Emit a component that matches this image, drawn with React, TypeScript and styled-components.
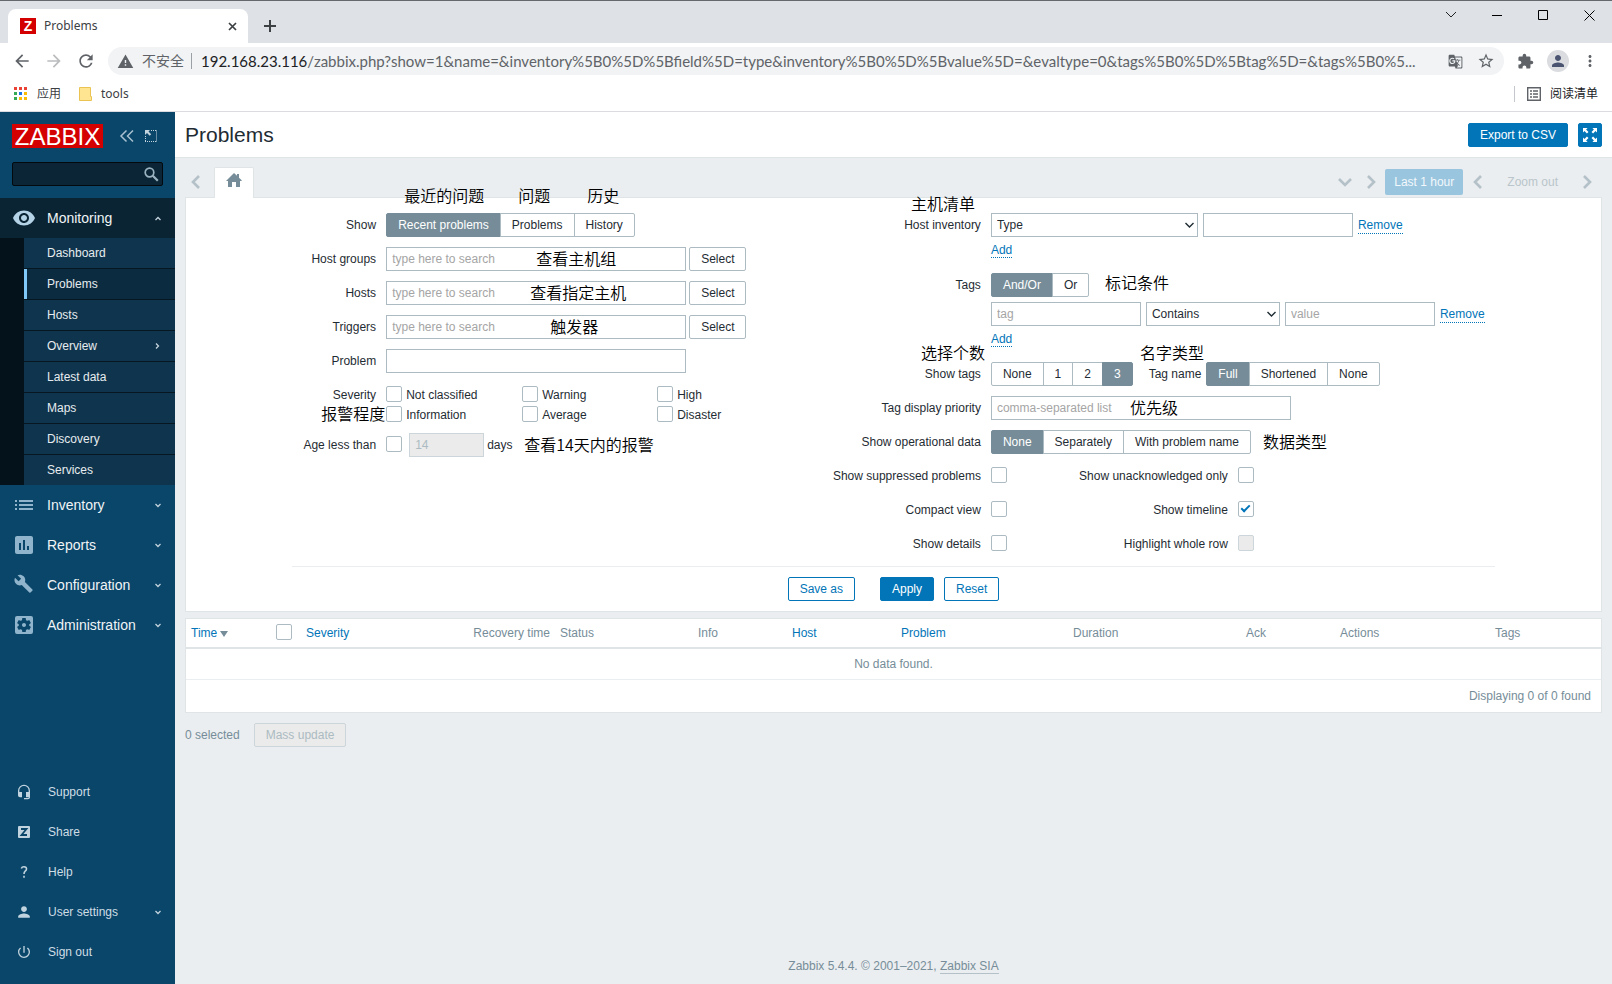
import React from 'react';
import styled, { createGlobalStyle, css } from 'styled-components';
import {
  MdArrowBack, MdArrowForward, MdRefresh, MdWarning, MdGTranslate, MdStarBorder, MdExtension, MdPerson,
  MdMoreVert, MdVisibility, MdInsertChart, MdBuild, MdSettingsApplications, MdPowerSettingsNew, MdHeadsetMic,
} from 'react-icons/md';

const sans = '"Liberation Sans", Arial, "Noto Sans CJK SC", sans-serif';
const chromeFont = '"Noto Sans", "Noto Sans CJK SC", sans-serif';

const GlobalStyle = createGlobalStyle`
  *, *::before, *::after { box-sizing: border-box; }
  html, body, #root { height: 100%; }
  body { margin: 0; font: 12px/16px ${sans}; color: #1f2c33; background: #ebeef0; }
  button, input, select { font: inherit; color: inherit; margin: 0; }
  button { cursor: pointer; }
  a { text-decoration: none; }
  ul { list-style: none; margin: 0; padding: 0; }
`;

/* ---------- browser window ---------- */

const Window = styled.div`
  display: flex;
  flex-direction: column;
  min-height: 100%;
`;
const Chrome = styled.header`
  font-family: ${chromeFont};
  background: #fff;
  border-bottom: 1px solid #dadce0;
  color: #3c4043;
`;
const TabStrip = styled.div`
  display: flex;
  align-items: flex-end;
  height: 43px;
  padding-left: 8px;
  background: #dee1e6;
  border-top: 1px solid #66686b;
`;
const BrowserTab = styled.div`
  display: flex;
  align-items: center;
  gap: 8px;
  width: 240px;
  height: 34px;
  padding: 0 9px 0 12px;
  background: #fff;
  border-radius: 8px 8px 0 0;
  font-size: 12px;
  span { flex: 1; }
`;
const Favicon = styled.b`
  width: 16px;
  background: #d40000;
  color: #fff;
  font: bold 14px/16px ${sans};
  text-align: center;
`;
const BareButton = styled.button<{ $w?: number; $h?: number }>`
  display: flex;
  align-items: center;
  justify-content: center;
  width: ${p => p.$w ?? 16}px;
  height: ${p => p.$h ?? 16}px;
  padding: 0;
  border: 0;
  background: none;
  flex: none;
`;
const NewTab = styled(BareButton)`margin: 0 auto 0 8px;`;
const WindowButtons = styled.div`
  display: flex;
  align-self: flex-start;
`;
const Toolbar = styled.div`
  display: flex;
  align-items: center;
  height: 36px;
  padding: 0 8px;
  color: #5f6368;
`;
const Omnibox = styled.div`
  display: flex;
  align-items: center;
  flex: 1;
  min-width: 0;
  height: 28px;
  margin: 0 6px 0 8px;
  padding: 0 3px 0 9px;
  border-radius: 14px;
  background: #f1f3f4;
  font-size: 14px;
`;
const Insecure = styled.span`
  padding: 0 7px 0 8px;
  margin-right: 9px;
  border-right: 1px solid #9aa0a6;
  white-space: nowrap;
`;
const Url = styled.span`
  flex: 1;
  min-width: 0;
  font: 15px/24px Lato, "Noto Sans", sans-serif;
  white-space: nowrap;
  b { font-weight: 400; color: #202124; }
`;
const Avatar = styled.span`
  display: flex;
  align-items: center;
  justify-content: center;
  width: 22px;
  height: 22px;
  border-radius: 50%;
  background: #dadce0;
  color: #4a5470;
`;
const Bookmarks = styled.nav`
  display: flex;
  align-items: center;
  height: 32px;
  padding: 0 14px 2px 14px;
  font-size: 12px;
  a { display: flex; align-items: center; gap: 9px; color: inherit; }
  a + a { margin-left: 18px; }
  a:last-child { margin-left: auto; padding-left: 12px; border-left: 1px solid #c4c7cb; color: #202124; }
`;

/* ---------- page frame ---------- */

const Page = styled.div`
  display: flex;
  flex: 1;
`;
const Sidebar = styled.aside`
  display: flex;
  flex-direction: column;
  width: 175px;
  flex: none;
  padding-bottom: 12px;
  background: #0a466a;
`;
const Brand = styled.div`
  display: flex;
  align-items: center;
  height: 48px;
  padding-left: 12px;
`;
const Logo = styled.a`
  width: 91px;
  height: 24px;
  flex: none;
  margin-right: 15px;
  background: #d40000;
  color: #fff;
  font-size: 24px;
  line-height: 25px;
  text-align: center;
`;
const Search = styled.form`
  display: flex;
  align-items: center;
  height: 24px;
  margin: 2px 12px 12px;
  padding-right: 1px;
  border: 1px solid #020a0f;
  border-radius: 2px;
  background: #0b2536;
  input { flex: 1; min-width: 0; border: 0; background: none; color: #fff; outline: 0; }
`;
const MenuLink = styled.a<{ $open?: boolean }>`
  display: flex;
  align-items: center;
  height: 40px;
  padding: 0 12px;
  color: #f0f4f6;
  font-size: 14px;
  background: ${p => (p.$open ? '#0a2434' : 'none')};
  > svg:first-child { flex: none; margin-right: 11px; color: ${p => (p.$open ? '#b5d3e6' : '#8fb4cb')}; }
  > span { flex: 1; }
`;
const SubMenu = styled.ul`
  padding-left: 24px;
  background: #04121b;
  li + li { border-top: 1px solid #061722; }
`;
const SubLink = styled.a<{ $active?: boolean }>`
  display: flex;
  align-items: center;
  justify-content: space-between;
  height: 30px;
  padding: 0 13px 0 20px;
  border-left: 3px solid ${p => (p.$active ? '#7fc8f8' : '#0f344d')};
  background: ${p => (p.$active ? '#0b2b40' : '#0f344d')};
  color: #e6ecef;
`;
const UserMenu = styled.nav`
  margin-top: auto;
`;
const UserLink = styled(MenuLink)`
  padding-left: 16px;
  color: #cfdde5;
  font-size: 12px;
  > svg:first-child { margin-right: 16px; color: #c0d3de; }
`;
const Main = styled.main`
  display: flex;
  flex-direction: column;
  flex: 1;
  min-width: 0;
`;
const PageHeader = styled.div`
  display: flex;
  align-items: center;
  gap: 10px;
  height: 46px;
  padding: 0 10px;
  background: #fff;
  border-bottom: 1px solid #dfe4e7;
  h1 { flex: 1; margin: 0; font-size: 21px; font-weight: 400; line-height: 24px; }
`;
const Button = styled.button<{ $kind?: 'primary' | 'outline' | 'plain' | 'square' }>`
  display: inline-flex;
  align-items: center;
  justify-content: center;
  height: 24px;
  padding: 0 11px;
  border: 1px solid #0275b8;
  border-radius: 2px;
  background: #fff;
  color: #0275b8;
  white-space: nowrap;
  ${p => (p.$kind === 'primary' || p.$kind === 'square') && css`background: #0275b8; color: #fff;`}
  ${p => p.$kind === 'square' && css`width: 24px; padding: 0;`}
  ${p => p.$kind === 'plain' && css`border-color: #acbbc2; color: #1f2c33;`}
  &:disabled { background: #ebebeb; border-color: #ccd5d9; color: #acbbc2; }
`;
const Content = styled.div`
  display: flex;
  flex-direction: column;
  flex: 1;
  padding: 9px 10px 10px;
`;
const FilterTabs = styled.div`
  display: flex;
  align-items: center;
  height: 30px;
  color: #b4c1c8;
`;
const HomeTab = styled.button`
  position: relative;
  display: flex;
  align-items: center;
  justify-content: center;
  align-self: stretch;
  width: 40px;
  margin: 0 auto -1px 7px;
  padding: 0 0 6px;
  border: 1px solid #dfe4e7;
  border-bottom: 0;
  border-radius: 2px 2px 0 0;
  background: #fff;
  color: #768d99;
`;
const TimeRange = styled.button`
  height: 26px;
  margin: 0 3px 0 1px;
  padding: 0 9px;
  border: 0;
  border-radius: 2px;
  background: #99c5df;
  color: #f2f8fb;
`;
const ZoomOut = styled.button`
  padding: 0 14px 0 17px;
  border: 0;
  background: none;
  color: #b9c5cb;
`;
const Panel = styled.section`
  border: 1px solid #dfe4e7;
  background: #fff;
`;
const FilterForm = styled.form`
  width: 85%;
  min-width: 1140px;
  margin: 0 auto;
  padding: 15px 0 10px;
`;
const FilterColumns = styled.div`
  display: flex;
  justify-content: space-between;
  padding-bottom: 10px;
  border-bottom: 1px solid #ebeef0;
`;
const Fields = styled.div<{ $label: number; $width: number }>`
  display: grid;
  grid-template-columns: ${p => p.$label}px 1fr;
  gap: 10px;
  align-content: start;
  width: ${p => p.$width}px;
`;
const Label = styled.label`
  line-height: 24px;
  text-align: right;
  white-space: nowrap;
`;
const Field = styled.div`
  position: relative;
  min-width: 0;
`;
const Line = styled.div<{ $gap?: number }>`
  display: flex;
  align-items: center;
  height: 24px;
  gap: ${p => p.$gap ?? 5}px;
  & + & { margin-top: 5px; }
`;
const TextBox = styled.input<{ $w: number }>`
  width: ${p => p.$w}px;
  height: 24px;
  padding: 0 5px;
  border: 1px solid #acbbc2;
  background: #fff;
  flex: none;
  &::placeholder { color: #a5a5a5; opacity: 1; }
  &:disabled { background: #ebebeb; border-color: #ccd5d9; color: #acbbc2; }
`;
const SelectFrame = styled.span<{ $w: number }>`
  display: grid;
  align-items: center;
  width: ${p => p.$w}px;
  flex: none;
  > * { grid-area: 1 / 1; }
  > svg { justify-self: end; margin-right: 4px; pointer-events: none; }
`;
const SelectBox = styled.select`
  appearance: none;
  width: 100%;
  height: 24px;
  padding: 0 5px;
  border: 1px solid #acbbc2;
  border-radius: 0;
  background: #fff;
`;
const Check = styled.input.attrs({ type: 'checkbox' })`
  appearance: none;
  display: grid;
  place-items: center;
  width: 16px;
  height: 16px;
  margin-bottom: 2px;
  border: 1px solid #acbbc2;
  border-radius: 2px;
  background: #fff;
  flex: none;
  &:checked::before {
    content: '';
    width: 9px;
    height: 5px;
    margin-bottom: 3px;
    border: solid #0275b8;
    border-width: 0 0 2px 2px;
    transform: rotate(-45deg);
  }
  &:disabled { background: #ebebeb; border-color: #ccd5d9; }
`;
const AgeCheck = styled(Check)`
  margin-right: 4px;
`;
const SeverityGrid = styled.div`
  display: grid;
  grid-template-columns: 136px 135px auto;
  grid-auto-rows: 16px;
  justify-content: start;
  row-gap: 4px;
  padding-top: 4px;
  label { display: flex; align-items: center; gap: 4px; }
`;
const SegmentGroup = styled.span`
  display: flex;
  label { position: relative; }
  label + label { margin-left: -1px; }
  input { position: absolute; opacity: 0; }
  span {
    display: block;
    height: 24px;
    padding: 0 11px;
    border: 1px solid #acbbc2;
    line-height: 22px;
    white-space: nowrap;
  }
  label:first-child span { border-radius: 2px 0 0 2px; }
  label:last-child span { border-radius: 0 2px 2px 0; }
  input:checked + span { background: #768d99; border-color: #768d99; color: #fff; }
`;
const DottedLink = styled.a`
  padding-top: 2px;
  border-bottom: 1px dotted #0275b8;
  color: #0275b8;
  line-height: 15px;
`;
const AddLine = styled.div`
  height: 26px;
  padding-top: 5px;
`;
const NameLabel = styled.span`
  margin-left: 11px;
`;
const PairLabel = styled.label`
  width: 221px;
  padding-right: 5px;
  text-align: right;
`;
const Note = styled.span<{ $x: number; $y: number }>`
  position: absolute;
  left: ${p => p.$x}px;
  top: ${p => p.$y}px;
  z-index: 1;
  color: #000;
  font: 350 16px/24px "Noto Sans CJK SC", sans-serif;
  white-space: nowrap;
  pointer-events: none;
`;
const FormButtons = styled.div`
  display: flex;
  justify-content: center;
  gap: 10px;
  padding-top: 10px;
  button:first-child { margin-right: 15px; }
`;
const DataTable = styled.table`
  width: 100%;
  margin-top: 6px;
  table-layout: fixed;
  border-collapse: separate;
  border-spacing: 0;
  border: 1px solid #dfe4e7;
  background: #fff;
  color: #768d99;
  th { height: 30px; padding: 0 5px; border-bottom: 2px solid #dfe4e7; font-weight: 400; text-align: left; white-space: nowrap; }
  th a { color: #0275b8; }
  th svg { margin-left: 3px; }
  td { height: 31px; text-align: center; border-bottom: 1px solid #ebeef0; }
  tfoot td { height: 32px; padding: 0 10px; text-align: right; border-bottom: 0; }
`;
const RightTh = styled.th`
  && { text-align: right; }
`;
const BulkActions = styled.div`
  display: flex;
  align-items: center;
  gap: 14px;
  margin-top: 10px;
  color: #768d99;
`;
const Footer = styled.footer`
  margin-top: auto;
  color: #768d99;
  text-align: center;
  a { color: inherit; border-bottom: 1px solid #b4c1c8; }
`;

/* ---------- drawings ---------- */

const Stroke = ({ d, w, h, sw = 1, color = 'currentColor' }: { d: string; w: number; h: number; sw?: number; color?: string }) => (
  <svg width={w} height={h} viewBox={`0 0 ${w} ${h}`} fill="none" stroke={color} strokeWidth={sw} aria-hidden="true"><path d={d} /></svg>
);
const Caret = ({ up, right }: { up?: boolean; right?: boolean }) => (
  <Stroke w={9} h={8} sw={1.3} color="#c3d2dc" d={right ? 'M3 1.5l2.500 2.500-2.500 2.500' : up ? 'M1.500 6l2.500-2.500 2.500 2.500' : 'M1.500 3l2.500 2.500 2.500-2.500'} />
);
const Chevron = ({ dir }: { dir: 'left' | 'right' | 'down' }) => (
  <Stroke w={14} h={14} sw={2.6} d={{ left: 'M10 1L4 7l6 6', right: 'M4 1l6 6-6 6', down: 'M1 4l6 6 6-6' }[dir]} />
);
const ListIcon = () => (
  <svg width="24" height="18" viewBox="0 0 24 18" fill="currentColor" aria-hidden="true">
    <path d="M3 4h2v2H3zM7 4h14v2H7zM3 8h2v2H3zM7 8h14v2H7zM3 12h2v2H3zM7 12h14v2H7z" />
  </svg>
);
const AppsIcon = () => {
  const colors = ['#ea4335', '#ea4335', '#ea4335', '#34a853', '#1a73e8', '#fbbc04', '#34a853', '#fbbc04', '#fbbc04'];
  return (
    <svg width="14" height="14" viewBox="0 0 14 14" aria-hidden="true">
      {colors.map((c, i) => <rect key={i} x={(i % 3) * 5} y={Math.floor(i / 3) * 5} width="3" height="3" fill={c} />)}
    </svg>
  );
};
const KioskIcon = () => (
  <svg width="14" height="14" viewBox="0 0 14 14" fill="#fff" aria-hidden="true">
    <path d="M0 0h4.600L3.100 1.500 5.500 3.900 3.900 5.500 1.500 3.100 0 4.600zM14 0v4.600l-1.500-1.500-2.400 2.400-1.600-1.600 2.400-2.400L9.400 0zM14 14H9.400l1.500-1.500-2.400-2.400 1.600-1.600 2.400 2.400L14 9.400zM0 14V9.400l1.500 1.500 2.400-2.400 1.600 1.600-2.400 2.400L4.600 14z" />
  </svg>
);

/* ---------- parts ---------- */

const Segments = ({ name, options, value }: { name: string; options: string[]; value: string }) => (
  <SegmentGroup role="radiogroup" aria-label={name}>
    {options.map(o => (
      <label key={o}><input type="radio" name={name} defaultChecked={o === value} /><span>{o}</span></label>
    ))}
  </SegmentGroup>
);
const Dropdown = ({ label, options, width }: { label: string; options: string[]; width: number }) => (
  <SelectFrame $w={width}>
    <SelectBox aria-label={label}>{options.map(o => <option key={o}>{o}</option>)}</SelectBox>
    <Stroke w={9} h={8} sw={1.4} d="M0.5 2l4 4 4-4" />
  </SelectFrame>
);
const SearchRow = ({ id, label, note, x }: { id: string; label: string; note: string; x: number }) => (
  <>
    <Label htmlFor={id}>{label}</Label>
    <Field>
      <Line $gap={3}>
        <TextBox id={id} $w={300} placeholder="type here to search" />
        <Button type="button" $kind="plain">Select</Button>
      </Line>
      <Note $x={x} $y={-1}>{note}</Note>
    </Field>
  </>
);
const CheckPair = ({ left, right, checked, disabled }: { left: string; right: string; checked?: boolean; disabled?: boolean }) => (
  <>
    <Label htmlFor={left}>{left}</Label>
    <Line>
      <Check id={left} />
      <PairLabel htmlFor={right}>{right}</PairLabel>
      <Check id={right} defaultChecked={checked} disabled={disabled} />
    </Line>
  </>
);

const columns: [string, number][] = [
  ['Time', 85], ['', 30], ['Severity', 167], ['Recovery time', 87], ['Status', 138], ['Info', 94], ['Host', 109],
  ['Problem', 172], ['Duration', 173], ['Ack', 94], ['Actions', 155], ['Tags', 111],
];
const sortable = ['Time', 'Severity', 'Host', 'Problem'];

export default function App() {
  return (
    <Window>
      <GlobalStyle />
      <Chrome>
        <TabStrip>
          <BrowserTab>
            <Favicon>Z</Favicon>
            <span>Problems</span>
            <BareButton aria-label="Close tab" $w={14}><Stroke w={9} h={9} sw={1.7} d="M1 1l7 7M8 1L1 8" /></BareButton>
          </BrowserTab>
          <NewTab aria-label="New tab" $w={28} $h={34}><Stroke w={12} h={12} sw={2} d="M6 0v12M0 6h12" /></NewTab>
          <WindowButtons>
            <BareButton aria-label="Search tabs" $w={46} $h={28}><Stroke w={12} h={8} color="#222" d="M1 1l5 5 5-5" /></BareButton>
            <BareButton aria-label="Minimize" $w={46} $h={28}><Stroke w={10} h={10} color="#000" d="M0 5.5h10" /></BareButton>
            <BareButton aria-label="Maximize" $w={46} $h={28}><Stroke w={10} h={10} color="#000" d="M.5 .5h9v9h-9z" /></BareButton>
            <BareButton aria-label="Close" $w={46} $h={28}><Stroke w={11} h={11} color="#000" d="M.5 .5l10 10M10.5 .5l-10 10" /></BareButton>
          </WindowButtons>
        </TabStrip>
        <Toolbar>
          <BareButton aria-label="Back" $w={28} $h={28}><MdArrowBack size={20} /></BareButton>
          <BareButton aria-label="Forward" $w={36} $h={28}><MdArrowForward size={20} color="#babcbe" /></BareButton>
          <BareButton aria-label="Reload" $w={28} $h={28}><MdRefresh size={20} /></BareButton>
          <Omnibox>
            <MdWarning size={17} />
            <Insecure>不安全</Insecure>
            <Url><b>192.168.23.116</b>/zabbix.php?show=1&amp;name=&amp;inventory%5B0%5D%5Bfield%5D=type&amp;inventory%5B0%5D%5Bvalue%5D=&amp;evaltype=0&amp;tags%5B0%5D%5Btag%5D=&amp;tags%5B0%5...</Url>
            <BareButton aria-label="Translate" $w={32}><MdGTranslate size={15} /></BareButton>
            <BareButton aria-label="Bookmark" $w={30}><MdStarBorder size={18} /></BareButton>
          </Omnibox>
          <BareButton aria-label="Extensions" $w={30}><MdExtension size={17} /></BareButton>
          <BareButton aria-label="Profile" $w={36}><Avatar><MdPerson size={18} /></Avatar></BareButton>
          <BareButton aria-label="Menu" $w={28}><MdMoreVert size={18} /></BareButton>
        </Toolbar>
        <Bookmarks>
          <a href="#apps"><AppsIcon />应用</a>
          <a href="#tools">
            <svg width="13" height="14" viewBox="0 0 13 14" aria-hidden="true"><path d="M.5.5h11v9h1v4H.5z" fill="#ffe591" stroke="#e9c452" /></svg>
            tools
          </a>
          <a href="#reading">
            <svg width="14" height="14" viewBox="0 0 14 14" aria-hidden="true"><path d="M.7.7h12.600v12.600H.7z" fill="none" stroke="#5f6368" strokeWidth="1.400" /><path d="M3 4h2M6 4h5M3 7h2M6 7h5M3 10h2M6 10h5" stroke="#5f6368" strokeWidth="1.300" /></svg>
            阅读清单
          </a>
        </Bookmarks>
      </Chrome>
      <Page>
        <Sidebar>
          <Brand>
            <Logo href="#home">ZABBIX</Logo>
            <BareButton aria-label="Collapse sidebar" $w={18}><Stroke w={16} h={14} color="#a9c1d0" sw={1.5} d="M7.500 1.500L2 7l5.500 5.500M14 1.500L8.500 7l5.500 5.500" /></BareButton>
            <BareButton aria-label="Hide sidebar" $w={30}>
              <svg width="14" height="14" viewBox="0 0 14 14" fill="none" stroke="#c3d4de" aria-hidden="true"><path d="M7 1.500h6M12.500 1.500v12M1.500 7v6M1 12.500h12" strokeDasharray="1 1" /><path d="M1 1h5L4.500 2.500l2.700 2.700-1.500 1.500L3 4 1 6z" fill="#c3d4de" stroke="none" /></svg>
            </BareButton>
          </Brand>
          <Search>
            <input aria-label="Search" />
            <BareButton aria-label="Run search" $w={20}><svg width="15" height="15" viewBox="0 0 15 15" fill="none" stroke="#9bb3c1" aria-hidden="true"><circle cx="5.500" cy="5.500" r="4.300" strokeWidth="1.700" /><path d="M8.800 8.800l5 5" strokeWidth="2.200" /></svg></BareButton>
          </Search>
          <nav>
            <MenuLink href="#monitoring" $open><MdVisibility size={24} /><span>Monitoring</span><Caret up /></MenuLink>
            <SubMenu>
              {['Dashboard', 'Problems', 'Hosts', 'Overview', 'Latest data', 'Maps', 'Discovery', 'Services'].map(t => (
                <li key={t}><SubLink href={`#${t}`} $active={t === 'Problems'}>{t}{t === 'Overview' && <Caret right />}</SubLink></li>
              ))}
            </SubMenu>
            <MenuLink href="#inventory"><ListIcon /><span>Inventory</span><Caret /></MenuLink>
            <MenuLink href="#reports"><MdInsertChart size={24} /><span>Reports</span><Caret /></MenuLink>
            <MenuLink href="#configuration"><MdBuild size={24} viewBox="-2 -1 29 29" /><span>Configuration</span><Caret /></MenuLink>
            <MenuLink href="#administration"><MdSettingsApplications size={24} /><span>Administration</span><Caret /></MenuLink>
          </nav>
          <UserMenu>
            <UserLink href="#support"><MdHeadsetMic size={16} /><span>Support</span></UserLink>
            <UserLink href="#share">
              <svg width="16" height="16" viewBox="0 0 16 16" aria-hidden="true"><rect x="2" y="2" width="12" height="12" rx="1" fill="currentColor" /><path d="M5 5h5.500L5.500 11H11" fill="none" stroke="#0a466a" strokeWidth="1.800" /></svg>
              <span>Share</span>
            </UserLink>
            <UserLink href="#help">
              <Stroke w={16} h={16} sw={1.6} d="M5.300 4.500Q6 2.600 8 2.700q2.600.1 2.500 2.200 0 1.300-1.300 2.300Q8 8.200 8 10M8 11.800v2" />
              <span>Help</span>
            </UserLink>
            <UserLink href="#user"><MdPerson size={16} viewBox="1 1 22 22" /><span>User settings</span><Caret /></UserLink>
            <UserLink href="#signout"><MdPowerSettingsNew size={16} /><span>Sign out</span></UserLink>
          </UserMenu>
        </Sidebar>
        <Main>
          <PageHeader>
            <h1>Problems</h1>
            <Button $kind="primary">Export to CSV</Button>
            <Button $kind="square" aria-label="Kiosk mode"><KioskIcon /></Button>
          </PageHeader>
          <Content>
            <FilterTabs>
              <BareButton aria-label="Previous tab" $w={22}><Chevron dir="left" /></BareButton>
              <HomeTab aria-label="Home"><svg width="16" height="14" viewBox="0 0 16 14" fill="currentColor" aria-hidden="true"><path d="M8 0l3 2.800V1h2v3.700L16 7.500l-1 .5h-1v6h-4V9H6v5H2V8H0z" /></svg></HomeTab>
              <BareButton aria-label="More tabs" $w={26}><Chevron dir="down" /></BareButton>
              <BareButton aria-label="Next tab" $w={26}><Chevron dir="right" /></BareButton>
              <TimeRange>Last 1 hour</TimeRange>
              <BareButton aria-label="Earlier" $w={24}><Chevron dir="left" /></BareButton>
              <ZoomOut>Zoom out</ZoomOut>
              <BareButton aria-label="Later" $w={30}><Chevron dir="right" /></BareButton>
            </FilterTabs>
            <Panel>
              <FilterForm>
                <FilterColumns>
                  <Fields $label={84} $width={480}>
                    <Label as="span">Show</Label>
                    <Field>
                      <Segments name="Show" options={['Recent problems', 'Problems', 'History']} value="Recent problems" />
                      <Note $x={18} $y={-30}>最近的问题</Note>
                      <Note $x={132} $y={-30}>问题</Note>
                      <Note $x={201} $y={-30}>历史</Note>
                    </Field>
                    <SearchRow id="groups" label="Host groups" note="查看主机组" x={150} />
                    <SearchRow id="hosts" label="Hosts" note="查看指定主机" x={144} />
                    <SearchRow id="triggers" label="Triggers" note="触发器" x={164} />
                    <Label htmlFor="problem">Problem</Label>
                    <Field><Line><TextBox id="problem" $w={300} /></Line></Field>
                    <Label as="span">Severity</Label>
                    <Field>
                      <SeverityGrid>
                        {['Not classified', 'Warning', 'High', 'Information', 'Average', 'Disaster'].map(s => (
                          <label key={s}><Check />{s}</label>
                        ))}
                      </SeverityGrid>
                      <Note $x={-65} $y={18}>报警程度</Note>
                    </Field>
                    <Label htmlFor="age">Age less than</Label>
                    <Field>
                      <Line $gap={3}>
                        <AgeCheck id="age" />
                        <TextBox $w={75} defaultValue="14" aria-label="Days" disabled />
                        days
                      </Line>
                      <Note $x={138} $y={-1}>查看14天内的报警</Note>
                    </Field>
                  </Fields>
                  <Fields $label={148} $width={662}>
                    <Label as="span">Host inventory</Label>
                    <Field>
                      <Line>
                        <Dropdown label="Host inventory" options={['Type']} width={207} />
                        <TextBox $w={150} aria-label="Inventory value" />
                        <DottedLink href="#remove-inventory">Remove</DottedLink>
                      </Line>
                      <AddLine><DottedLink href="#add-inventory">Add</DottedLink></AddLine>
                      <Note $x={-80} $y={-22}>主机清单</Note>
                    </Field>
                    <Label as="span">Tags</Label>
                    <Field>
                      <Line><Segments name="Tags" options={['And/Or', 'Or']} value="And/Or" /></Line>
                      <Line>
                        <TextBox $w={150} placeholder="tag" aria-label="Tag" />
                        <Dropdown label="Operator" options={['Contains']} width={134} />
                        <TextBox $w={150} placeholder="value" aria-label="Tag value" />
                        <DottedLink href="#remove-tag">Remove</DottedLink>
                      </Line>
                      <AddLine><DottedLink href="#add-tag">Add</DottedLink></AddLine>
                      <Note $x={114} $y={-3}>标记条件</Note>
                    </Field>
                    <Label as="span">Show tags</Label>
                    <Field>
                      <Line>
                        <Segments name="Show tags" options={['None', '1', '2', '3']} value="3" />
                        <NameLabel>Tag name</NameLabel>
                        <Segments name="Tag name" options={['Full', 'Shortened', 'None']} value="Full" />
                      </Line>
                      <Note $x={-70} $y={-22}>选择个数</Note>
                      <Note $x={149} $y={-22}>名字类型</Note>
                    </Field>
                    <Label htmlFor="priority">Tag display priority</Label>
                    <Field>
                      <Line><TextBox id="priority" $w={300} placeholder="comma-separated list" /></Line>
                      <Note $x={139} $y={-1}>优先级</Note>
                    </Field>
                    <Label as="span">Show operational data</Label>
                    <Field>
                      <Line><Segments name="Show operational data" options={['None', 'Separately', 'With problem name']} value="None" /></Line>
                      <Note $x={272} $y={-1}>数据类型</Note>
                    </Field>
                    <CheckPair left="Show suppressed problems" right="Show unacknowledged only" />
                    <CheckPair left="Compact view" right="Show timeline" checked />
                    <CheckPair left="Show details" right="Highlight whole row" disabled />
                  </Fields>
                </FilterColumns>
                <FormButtons>
                  <Button type="button">Save as</Button>
                  <Button type="button" $kind="primary">Apply</Button>
                  <Button type="button">Reset</Button>
                </FormButtons>
              </FilterForm>
            </Panel>
            <DataTable>
              <colgroup>{columns.map(([n, w]) => <col key={n} style={{ width: w }} />)}</colgroup>
              <thead>
                <tr>
                  {columns.map(([n]) => {
                    if (!n) return <th key="all"><Check aria-label="Select all" /></th>;
                    if (n === 'Recovery time') return <RightTh key={n}>{n}</RightTh>;
                    return (
                      <th key={n}>
                        {sortable.includes(n) ? <a href={`#sort-${n}`}>{n}</a> : n}
                        {n === 'Time' && <svg width="8" height="6" viewBox="0 0 8 6" aria-hidden="true"><path d="M0 0h8L4 6z" fill="#768d99" /></svg>}
                      </th>
                    );
                  })}
                </tr>
              </thead>
              <tbody><tr><td colSpan={12}>No data found.</td></tr></tbody>
              <tfoot><tr><td colSpan={12}>Displaying 0 of 0 found</td></tr></tfoot>
            </DataTable>
            <BulkActions>
              0 selected
              <Button disabled>Mass update</Button>
            </BulkActions>
            <Footer>Zabbix 5.4.4. © 2001–2021, <a href="#sia">Zabbix SIA</a></Footer>
          </Content>
        </Main>
      </Page>
    </Window>
  );
}
